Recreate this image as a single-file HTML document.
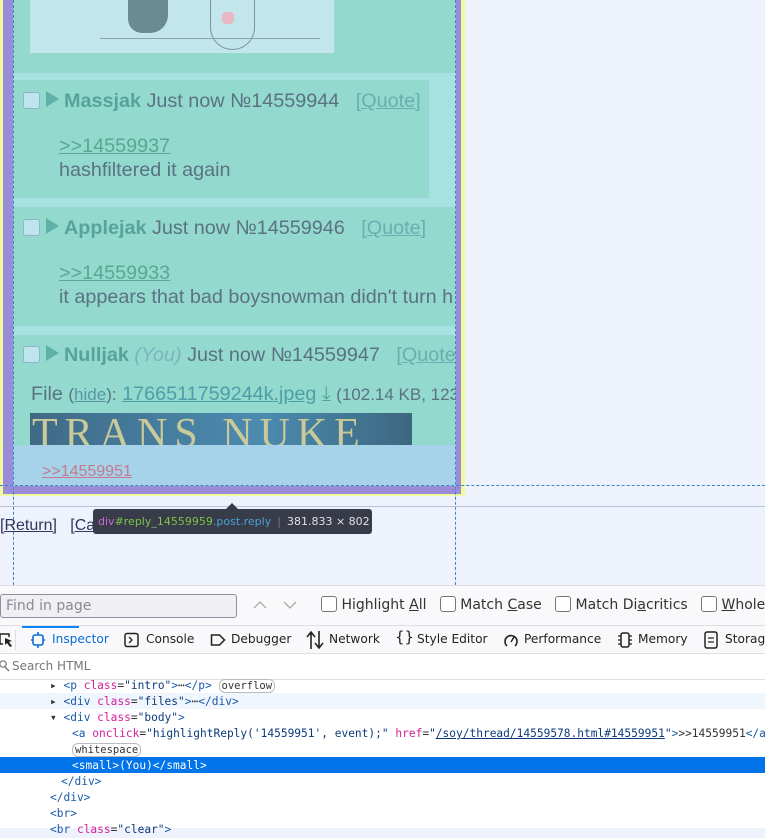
<!DOCTYPE html>
<html><head><meta charset="utf-8">
<style>
*{margin:0;padding:0;box-sizing:border-box}
body{width:765px;height:828px;overflow:hidden;background:#eef2fc;font-family:"Liberation Sans",sans-serif;position:relative}
.a{position:absolute}
.post{font-size:19.8px;color:#5a7282;white-space:nowrap;line-height:22px}
.name{color:#56a39a;font-weight:bold}
.q{color:#6aaeb0;text-decoration:underline}
.lnk{color:#5aa890;text-decoration:underline}
.cb{width:17px;height:17px;border:1.5px solid #8fb6c6;border-radius:3px;background:#bfe4ee;display:inline-block}
.tri{width:0;height:0;border-left:13px solid #5fb1a8;border-top:8px solid transparent;border-bottom:8px solid transparent;display:inline-block}
.dv{font-family:"DejaVu Sans",sans-serif}
.mono{font-family:"DejaVu Sans Mono","Liberation Mono",monospace;font-size:11.2px;color:#333}
.tg{color:#1a5aa8}.at{color:#d6209a}.av{color:#0c3a7c}
.tab{position:absolute;top:631px;font-family:"DejaVu Sans",sans-serif;font-size:12.2px;color:#222;white-space:nowrap;line-height:17px}
</style></head><body>
<div class="a" style="left:0;top:0;width:465px;height:496px;background:#f2fa9e"></div>
<div class="a" style="left:3px;top:0;width:458px;height:494px;background:#9a8cd8"></div>
<div class="a" style="left:13px;top:0;width:443px;height:486px;background:#93d9cd"></div>
<div class="a" style="left:30px;top:0;width:304px;height:53px;background:#c3e5ec"></div>
<div class="a" style="left:128px;top:0;width:40px;height:33px;background:#6a8a94;border-radius:0 0 18px 14px"></div>
<div class="a" style="left:100px;top:38px;width:220px;height:1px;background:#8aa5ad"></div>
<div class="a" style="left:210px;top:0;width:45px;height:50px;border:1.5px solid #7b97a0;border-top:none;border-radius:0 0 25px 25px"></div>
<div class="a" style="left:222px;top:12px;width:12px;height:12px;background:#e8b8c4;border-radius:4px"></div>
<div class="a" style="left:13px;top:73px;width:443px;height:134px;background:#a5e2e1"></div>
<div class="a" style="left:14px;top:80px;width:415px;height:118px;background:#93d9cd"></div>
<div class="a" style="left:13px;top:207px;width:443px;height:119px;background:#93d9cd"></div>
<div class="a" style="left:13px;top:326px;width:443px;height:9px;background:#a5e2e1"></div>
<div class="a" style="left:13px;top:335px;width:443px;height:110px;background:#93d9cd"></div>
<div class="a" style="left:13px;top:445px;width:443px;height:41px;background:#a6d3ea"></div>

<div class="a post" style="left:23px;top:90px"><span class="cb" style="vertical-align:-2px"></span> <span class="tri"></span> <span class="name">Massjak</span> Just now №14559944 &nbsp;&nbsp;<span class="q">[Quote]</span></div>
<div class="a post lnk" style="left:59px;top:135px">&gt;&gt;14559937</div>
<div class="a post" style="left:59px;top:159px">hashfiltered it again</div>

<div class="a post" style="left:23px;top:217px"><span class="cb" style="vertical-align:-2px"></span> <span class="tri"></span> <span class="name">Applejak</span> Just now №14559946 &nbsp;&nbsp;<span class="q">[Quote]</span></div>
<div class="a post lnk" style="left:59px;top:262px">&gt;&gt;14559933</div>
<div class="a" style="left:59px;top:286px;width:397px;overflow:hidden"><div class="post">it appears that bad boysnowman didn't turn h</div></div>

<div class="a" style="left:23px;top:344px;width:433px;overflow:hidden"><div class="post"><span class="cb" style="vertical-align:-2px"></span> <span class="tri"></span> <span class="name">Nulljak</span> <i style="color:#7bb4bf">(You)</i> Just now №14559947 &nbsp;&nbsp;<span class="q">[Quote]</span></div></div>
<div class="a" style="left:31px;top:383px;width:425px;overflow:hidden"><div class="post">File <span style="font-size:17px">(<span class="q" style="color:#5a97a6">hide</span>):</span> <span class="q" style="color:#4d9ea8">1766511759244k.jpeg</span> <span style="color:#4ea59a">⤓</span> <span style="font-size:17px">(102.14 KB, 123</span></div></div>
<div class="a" style="left:30px;top:413px;width:382px;height:32px;background:linear-gradient(90deg,#3f6a86,#4c8bb0 60%,#3c6780);overflow:hidden"><div style="font-family:'Liberation Serif',serif;font-size:42px;color:#c9c99a;letter-spacing:7px;margin-top:-3px;margin-left:2px">TRANS NUKE</div></div>
<div class="a post" style="left:42px;top:461px;font-size:16px;color:#c57a8e;text-decoration:underline">&gt;&gt;14559951</div>

<div class="a" style="left:0;top:485px;width:765px;border-top:1px dashed #3b86c4"></div>
<div class="a" style="left:13px;top:0;height:585px;border-left:1px dashed #3b86c4"></div>
<div class="a" style="left:455px;top:0;height:585px;border-left:1px dashed #3b86c4"></div>
<div class="a" style="left:0;top:506px;width:765px;height:1px;background:#b7c2d4"></div>
<div class="a" style="left:0;top:517px;font-size:16px;color:#34345c;white-space:nowrap"><u>[Return]</u> &nbsp; <u>[Ca</u></div>

<div class="a" style="left:226px;top:503px;width:0;height:0;border-left:6px solid transparent;border-right:6px solid transparent;border-bottom:6px solid #383c48"></div>
<div class="a dv" style="left:93px;top:509px;width:279px;height:25px;background:#383c48;border-radius:3px;font-size:11px;line-height:25px;padding-left:5px;white-space:nowrap;color:#e0e0e6;overflow:hidden"><span style="color:#c769d6">div</span><span style="color:#7cc24c">#reply_14559959</span><span style="color:#4aa1d8">.post.reply</span><span style="color:#777;margin:0 6px">|</span>381.833 × 802</div>

<div class="a" style="left:0;top:585px;width:765px;height:243px;background:#fff;border-top:1px solid #ddd"></div>
<div class="a" style="left:0;top:586px;width:765px;height:40px;background:#f9f9fb;border-bottom:1px solid #e0e0e2"></div>
<div class="a dv" style="left:0;top:594px;width:237px;height:24px;border:1px solid #8f8f9d;border-radius:3px;background:#f0f0f4;font-size:14px;color:#8a8a94;line-height:22px;padding-left:5px">Find in page</div>
<svg class="a" style="left:252px;top:598px" width="48" height="14"><path d="M2 10l6-6 6 6M32 4l6 6 6-6" stroke="#aaa" stroke-width="1.3" fill="none"/></svg>
<div class="a dv" style="left:321px;top:596px;font-size:14px;color:#333;white-space:nowrap;line-height:18px">
<span class="cb" style="background:#fff;border-color:#777;width:16px;height:16px;vertical-align:-3px"></span> Highlight <u>A</u>ll &nbsp;&nbsp;<span class="cb" style="background:#fff;border-color:#777;width:16px;height:16px;vertical-align:-3px"></span> Match <u>C</u>ase &nbsp;&nbsp;<span class="cb" style="background:#fff;border-color:#777;width:16px;height:16px;vertical-align:-3px"></span> Match Di<u>a</u>critics &nbsp;&nbsp;<span class="cb" style="background:#fff;border-color:#777;width:16px;height:16px;vertical-align:-3px"></span> <u>W</u>hole</div>

<div class="a" style="left:0;top:626px;width:765px;height:28px;background:#f9f9fb;border-bottom:1px solid #e0e0e2"></div>
<div class="a" style="left:22px;top:626px;width:57px;height:2px;background:#0a84ff"></div>
<div class="a" style="left:15px;top:630px;width:1px;height:20px;background:#ddd"></div>
<svg class="a" style="left:0;top:632px" width="14" height="16"><path d="M0 2h9v3M0 2v10h3" stroke="#222" stroke-width="1.5" fill="none"/><path d="M5 6l7 3-3 1 3 4-2 1-3-4-2 2z" fill="#222"/></svg>
<svg class="a" style="left:31px;top:632px" width="14" height="16"><rect x="2" y="3" width="10" height="10" rx="2" stroke="#0a6cd6" stroke-width="1.6" fill="none"/><path d="M7 0v3M7 13v3M0 8h2M12 8h2" stroke="#0a6cd6" stroke-width="1.6"/></svg>
<div class="tab" style="left:52px;color:#0a6cd6">Inspector</div>
<svg class="a" style="left:124px;top:632px" width="16" height="16"><rect x="1" y="1.5" width="13" height="13" rx="2" stroke="#222" stroke-width="1.5" fill="none"/><path d="M5 5l3 3-3 3" stroke="#222" stroke-width="1.3" fill="none"/></svg>
<div class="tab" style="left:146px">Console</div>
<svg class="a" style="left:210px;top:632px" width="16" height="16"><path d="M1.5 3h8l5 5-5 5h-8z" stroke="#222" stroke-width="1.5" fill="none"/></svg>
<div class="tab" style="left:231px">Debugger</div>
<svg class="a" style="left:306px;top:630px" width="18" height="20"><path d="M5 19V3M1 7l4-5 4 5M13 1v16M9 13l4 5 4-5" stroke="#222" stroke-width="1.6" fill="none"/></svg>
<div class="tab" style="left:329px">Network</div>
<div class="tab" style="left:395px;font-size:15px;top:629px">{}</div>
<div class="tab" style="left:417px">Style Editor</div>
<svg class="a" style="left:503px;top:632px" width="16" height="16"><path d="M4 14a6 6 0 1 1 8 0" stroke="#222" stroke-width="1.6" fill="none"/><path d="M8 10l3-5" stroke="#222" stroke-width="1.5"/></svg>
<div class="tab" style="left:524px">Performance</div>
<svg class="a" style="left:617px;top:631px" width="16" height="18"><rect x="4" y="2" width="8" height="14" rx="2" stroke="#222" stroke-width="1.5" fill="none"/><path d="M1 5h3M1 9h3M1 13h3M12 5h3M12 9h3M12 13h3" stroke="#222" stroke-width="1.3"/></svg>
<div class="tab" style="left:638px">Memory</div>
<svg class="a" style="left:704px;top:631px" width="14" height="18"><rect x="1" y="1" width="12" height="16" rx="2" stroke="#222" stroke-width="1.5" fill="none"/><path d="M4 7h6M4 11h6" stroke="#222" stroke-width="1.3"/></svg>
<div class="tab" style="left:725px">Storag</div>
<svg class="a" style="left:0;top:660px" width="10" height="12"><circle cx="3" cy="4" r="3.2" stroke="#777" stroke-width="1.2" fill="none"/><path d="M5 7l4 4" stroke="#777" stroke-width="1.3"/></svg>
<div class="a dv" style="left:12px;top:659px;font-size:12px;color:#777">Search HTML</div>
<div class="a" style="left:0;top:679px;width:765px;height:1px;background:#e0e0e2"></div>

<div class="a" style="left:0;top:693px;width:765px;height:16px;background:#f0f6fe"></div>
<div class="a" style="left:0;top:757px;width:765px;height:16px;background:#0074e8"></div>
<div class="a mono" style="left:50px;top:678px;line-height:16px;white-space:nowrap">
<div>▸ <span class="tg">&lt;p </span><span class="at">class</span>=<span class="av">"intro"</span><span class="tg">&gt;</span>⋯<span class="tg">&lt;/p&gt;</span> <span style="border:1px solid #bbb;border-radius:6px;font-size:10.5px;padding:0 2px">overflow</span></div>
<div>▸ <span class="tg">&lt;div </span><span class="at">class</span>=<span class="av">"files"</span><span class="tg">&gt;</span>⋯<span class="tg">&lt;/div&gt;</span></div>
<div>▾ <span class="tg">&lt;div </span><span class="at">class</span>=<span class="av">"body"</span><span class="tg">&gt;</span></div>
<div style="padding-left:22px"><span class="tg">&lt;a </span><span class="at">onclick</span>=<span class="av">"highlightReply('14559951', event);"</span> <span class="at">href</span>=<span class="av">"<u>/soy/thread/14559578.html#14559951</u>"</span><span class="tg">&gt;</span>&gt;&gt;14559951<span class="tg">&lt;/a&gt;</span></div>
<div style="padding-left:22px"><span style="border:1px solid #bbb;border-radius:6px;font-size:10.5px;padding:0 2px">whitespace</span></div>
<div style="padding-left:22px;color:#fff">&lt;small&gt;(You)&lt;/small&gt;</div>
<div style="padding-left:11px"><span class="tg">&lt;/div&gt;</span></div>
<div><span class="tg">&lt;/div&gt;</span></div>
<div><span class="tg">&lt;br&gt;</span></div>
<div><span class="tg">&lt;br </span><span class="at">class</span>=<span class="av">"clear"</span><span class="tg">&gt;</span></div>
</div>
</body></html>
